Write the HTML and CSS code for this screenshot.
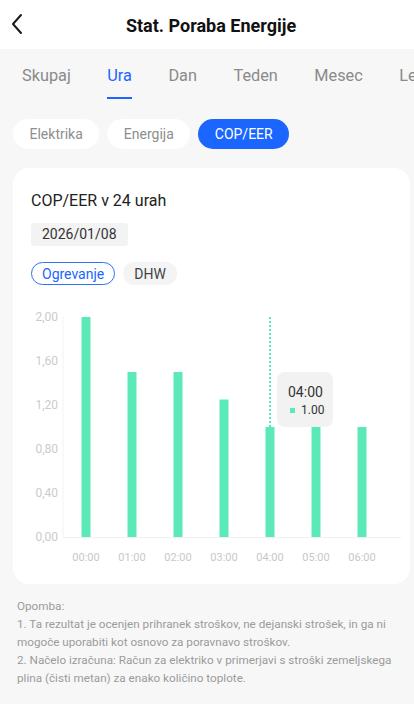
FILE: index.html
```html
<!DOCTYPE html>
<html lang="sl">
<head>
<meta charset="utf-8">
<title>Stat. Poraba Energije</title>
<link rel="stylesheet" href="styles.css">
</head>
<body>
<header class="topbar">
  <svg class="back" width="14" height="22" viewBox="0 0 14 22"><path d="M11 2 L3 11 L11 20" fill="none" stroke="#1a1a1a" stroke-width="2" stroke-linecap="round" stroke-linejoin="round"/></svg>
  <h1 class="title">Stat. Poraba Energije</h1>
</header>
<nav class="tabs">
  <span class="tab">Skupaj</span>
  <span class="tab active">Ura</span>
  <span class="tab">Dan</span>
  <span class="tab">Teden</span>
  <span class="tab">Mesec</span>
  <span class="tab">Le</span>
</nav>
<div class="chips">
  <span class="chip">Elektrika</span>
  <span class="chip">Energija</span>
  <span class="chip on">COP/EER</span>
</div>
<section class="card">
  <div class="card-head">
    <h2 class="card-title">COP/EER v 24 urah</h2>
    <div class="date">2026/01/08</div>
    <div class="modes">
      <span class="mode sel">Ogrevanje</span>
      <span class="mode">DHW</span>
    </div>
  </div>
  <div class="chart">
    <svg width="397" height="275" viewBox="0 0 397 275">
      <g font-size="12" fill="#cbcbcb" text-anchor="end">
        <text x="45" y="22">2,00</text>
        <text x="45" y="66">1,60</text>
        <text x="45" y="110">1,20</text>
        <text x="45" y="154">0,80</text>
        <text x="45" y="198">0,40</text>
        <text x="45" y="242">0,00</text>
      </g>
      <line x1="50" y1="18" x2="50" y2="238" stroke="#f3f3f3" stroke-width="1"/>
      <line x1="50" y1="238.5" x2="388" y2="238.5" stroke="#f0f0f0" stroke-width="1"/>
      <g fill="#5ae9b7">
        <rect x="68.5" y="18" width="9" height="220"/>
        <rect x="114.5" y="73" width="9" height="165"/>
        <rect x="160.5" y="73" width="9" height="165"/>
        <rect x="206.5" y="100.5" width="9" height="137.5"/>
        <rect x="252.5" y="128" width="9" height="110"/>
        <rect x="298.5" y="128" width="9" height="110"/>
        <rect x="344.5" y="128" width="9" height="110"/>
      </g>
      <line x1="257" y1="18" x2="257" y2="128" stroke="#5ae9b7" stroke-width="2" stroke-dasharray="2 2"/>
      <g font-size="11" fill="#c8c8c8" text-anchor="middle">
        <text x="73" y="262">00:00</text>
        <text x="119" y="262">01:00</text>
        <text x="165" y="262">02:00</text>
        <text x="211" y="262">03:00</text>
        <text x="257" y="262">04:00</text>
        <text x="303" y="262">05:00</text>
        <text x="349" y="262">06:00</text>
      </g>
    </svg>
    <div class="tip">
      <div class="tip-time">04:00</div>
      <div class="tip-val"><i class="dot"></i>1.00</div>
    </div>
  </div>
</section>
<div class="notes">
  <p>Opomba:</p>
  <p>1. Ta rezultat je ocenjen prihranek stroškov, ne dejanski strošek, in ga ni<br>mogoče uporabiti kot osnovo za poravnavo stroškov.</p>
  <p>2. Načelo izračuna: Račun za elektriko v primerjavi s stroški zemeljskega<br>plina (čisti metan) za enako količino toplote.</p>
</div>
</body>
</html>
```
FILE: styles.css
```css
* { box-sizing: border-box; }
html, body { margin: 0; padding: 0; }
body {
  width: 414px;
  height: 704px;
  overflow: hidden;
  background: #f7f7f7;
  font-family: Roboto, "Noto Sans", "Liberation Sans", sans-serif;
  color: #1a1a1a;
}
.topbar {
  height: 49px;
  background: #ffffff;
  display: flex;
  align-items: center;
  justify-content: center;
  position: relative;
}
.back {
  position: absolute;
  left: 10px;
  top: 13px;
}
.title {
  margin: 0;
  font-size: 18px;
  font-weight: 700;
  line-height: 22px;
  padding: 2px 0 0 8px;
  color: #111;
}
.tabs {
  display: flex;
  gap: 36.5px;
  padding: 16px 0 0 22px;
  white-space: nowrap;
  overflow: hidden;
}
.tab {
  font-size: 16.3px;
  line-height: 22px;
  color: #8a8a8a;
  padding-bottom: 10px;
  border-bottom: 2.5px solid transparent;
  flex: none;
}
.tab.active {
  color: #1a66ff;
  border-bottom-color: #1a66ff;
}
.chips {
  display: flex;
  gap: 8px;
  padding: 20px 0 0 13px;
}
.chip {
  height: 30px;
  display: flex;
  align-items: center;
  padding: 0 16.5px;
  border-radius: 15px;
  background: #ffffff;
  color: #8e8e8e;
  font-size: 14px;
}
.chip.on {
  background: #1a66ff;
  color: #ffffff;
  padding: 0 16.5px;
}
.card {
  margin: 19px 4px 0 13px;
  background: #ffffff;
  border-radius: 16px;
  height: 416px;
  padding-top: 23px;
}
.card-head {
  padding-left: 18px;
}
.card-title {
  margin: 0;
  font-size: 16px;
  font-weight: 400;
  line-height: 20px;
  color: #222;
}
.date {
  width: fit-content;
  margin-top: 12px;
  height: 23px;
  line-height: 23px;
  padding: 0 11px;
  background: #f3f3f3;
  border-radius: 3px;
  font-size: 14px;
  color: #333;
}
.modes {
  display: flex;
  gap: 8px;
  margin-top: 16px;
}
.mode {
  height: 23px;
  display: flex;
  align-items: center;
  padding: 0 11px;
  border-radius: 12px;
  background: #f4f4f4;
  font-size: 14px;
  color: #444;
}
.mode.sel {
  background: #fff;
  border: 1.5px solid #2e72f5;
  color: #1a66ff;
  padding: 0 10px;
}
.chart {
  position: relative;
  margin-top: 14px;
  height: 275px;
}
.chart svg { display: block; font-family: Roboto, "Noto Sans", sans-serif; }
.tip {
  position: absolute;
  left: 264px;
  top: 73px;
  width: 56px;
  height: 55px;
  background: #f2f2f2;
  border-radius: 8px;
  padding: 11px 0 0 11px;
}
.tip-time {
  font-size: 14px;
  line-height: 18px;
  color: #333;
}
.tip-val {
  display: flex;
  align-items: center;
  font-size: 12px;
  line-height: 16px;
  color: #333;
  margin-top: 1px;
}
.dot {
  width: 5px;
  height: 5px;
  background: #5ae9b7;
  margin: 0 6px 0 2px;
}
.notes {
  padding: 13px 0 0 17px;
  font-size: 11.7px;
  line-height: 18px;
  color: #9b9b9b;
  white-space: nowrap;
}
.notes p { margin: 0; }
```
